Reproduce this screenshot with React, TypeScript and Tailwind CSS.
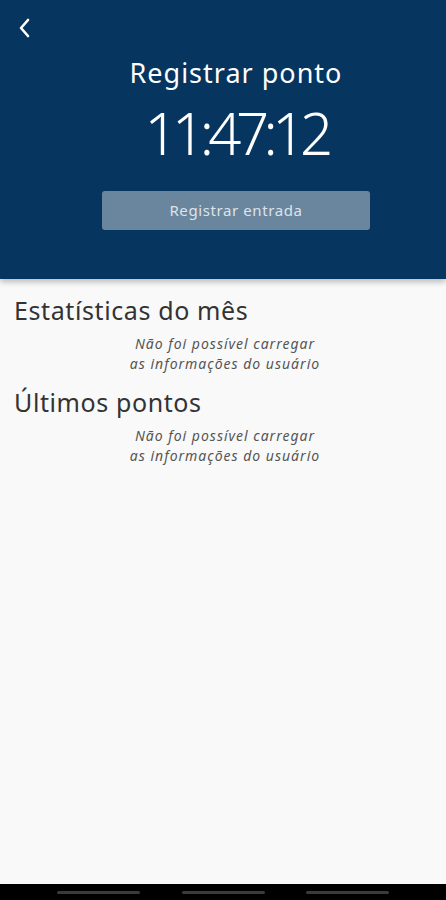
import React from 'react'

const font = { fontFamily: '"Noto Sans", "Open Sans", sans-serif' }

const Message = () => (
    <p className="mt-[9px] ml-[4px] text-center text-[14px] italic leading-[19.5px] tracking-[1px] text-[#555]">
        Não foi possível carregar
        <br />
        as informações do usuário
    </p>
)

const App = () => {
    return (
        <div style={font} className="flex h-[900px] w-full flex-col overflow-hidden bg-[#f9f9f9]">
            {/* cabeçalho */}
            <div className="relative z-10 flex h-[279px] shrink-0 flex-col bg-[#06355f] shadow-[0_3px_6px_rgba(0,0,0,0.25)]">
                <div className="flex w-full px-[16px] pt-[16px]">
                    <svg width="18" height="24" viewBox="0 0 18 24" fill="none" stroke="white" strokeWidth="2.6" strokeLinecap="round" strokeLinejoin="round">
                        <path d="M12 4 L5 12 L12 20" />
                    </svg>
                </div>
                <div className="flex flex-col items-center pl-[26px]">
                    <h1 className="mt-[15px] text-[27px] font-normal leading-[36px] tracking-[1px] text-white">Registrar ponto</h1>
                    <div className="mt-[10px] text-[58px] font-light leading-[64px] tracking-[-5.5px] text-white">11:47:12</div>
                    <button className="mt-[26px] h-[39px] w-[268px] rounded-[3px] bg-[#6a869e] text-[15px] tracking-[0.6px] text-[#dde3e8]">
                        Registrar entrada
                    </button>
                </div>
            </div>

            {/* conteúdo */}
            <div className="flex flex-1 flex-col px-[14px] pt-[16px]">
                <h2 className="text-[25px] font-normal leading-[30px] tracking-[0.6px] text-[#333]">Estatísticas do mês</h2>
                <Message />
                <h2 className="mt-[14px] text-[25px] font-normal leading-[30px] tracking-[0.6px] text-[#333]">Últimos pontos</h2>
                <Message />
            </div>

            {/* barra de navegação */}
            <div className="flex h-[16px] shrink-0 items-center justify-between bg-black px-[57px]">
                <div className="h-[3px] w-[83px] rounded-full bg-[#3a3a3a]" />
                <div className="h-[3px] w-[83px] rounded-full bg-[#3a3a3a]" />
                <div className="h-[3px] w-[83px] rounded-full bg-[#3a3a3a]" />
            </div>
        </div>
    )
}

export default App
